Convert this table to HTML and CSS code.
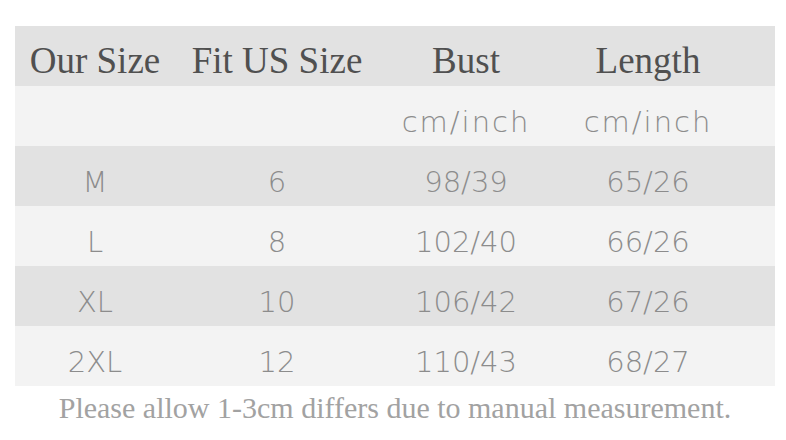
FILE: index.html
```html
<!DOCTYPE html>
<html>
<head>
<meta charset="utf-8">
<link rel="stylesheet" href="styles.css">
</head>
<body>
<div class="chart">
  <div class="row dark head">
    <div class="c">Our Size</div><div class="c">Fit US Size</div><div class="c">Bust</div><div class="c">Length</div><div></div>
  </div>
  <div class="row light units">
    <div class="c"></div><div class="c"></div><div class="c">cm/inch</div><div class="c">cm/inch</div><div></div>
  </div>
  <div class="row dark">
    <div class="c">M</div><div class="c">6</div><div class="c">98/39</div><div class="c">65/26</div><div></div>
  </div>
  <div class="row light">
    <div class="c">L</div><div class="c">8</div><div class="c">102/40</div><div class="c">66/26</div><div></div>
  </div>
  <div class="row dark">
    <div class="c">XL</div><div class="c">10</div><div class="c">106/42</div><div class="c">67/26</div><div></div>
  </div>
  <div class="row light">
    <div class="c">2XL</div><div class="c">12</div><div class="c">110/43</div><div class="c">68/27</div><div></div>
  </div>
</div>
<p class="note">Please allow 1-3cm differs due to manual measurement.</p>
</body>
</html>
```
FILE: styles.css
```css
html, body { margin: 0; padding: 0; background: #ffffff; }
body { width: 786px; height: 440px; overflow: hidden; }
.chart { margin: 26px 0 0 15px; width: 760px; }
.row {
  display: grid;
  grid-template-columns: 160px 204px 174px 190px 1fr;
  height: 60px;
  align-items: center;
  font-family: "DejaVu Sans", sans-serif;
  font-weight: 200;
  font-size: 29px;
  color: #8c8c8c;
}
.row.dark { background: #e2e2e2; }
.row.light { background: #f3f3f3; }
.c { text-align: center; white-space: nowrap; padding-top: 12px; }
.units .c { letter-spacing: 2px; }
.head { font-family: "Liberation Serif", serif; font-weight: 400; font-size: 37px; color: #505050; }
.head .c { padding-top: 8px; }
.note {
  margin: 5px 0 0 0;
  text-align: center;
  font-family: "Liberation Serif", serif;
  font-size: 30px;
  line-height: 34px;
  color: #a2a2a2;
  padding-left: 4px;
}
```
